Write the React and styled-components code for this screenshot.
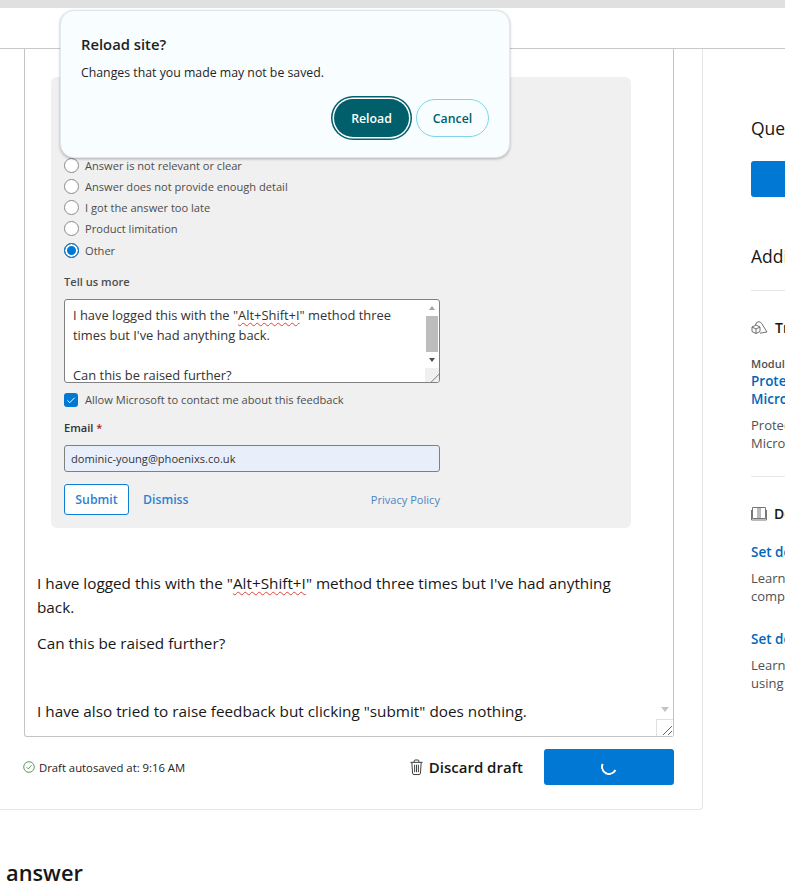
import styled, { createGlobalStyle } from 'styled-components'

const GlobalStyle = createGlobalStyle`
  html, body {
    margin: 0;
    padding: 0;
    background: #fff;
  }
  body {
    width: 785px;
    height: 885px;
    overflow: hidden;
    position: relative;
    font-family: "Open Sans", "Liberation Sans", sans-serif;
    color: #171717;
  }
  * { box-sizing: border-box; }
`

const reasons = [
  { text: 'Answer is not relevant or clear' },
  { text: 'Answer does not provide enough detail' },
  { text: 'I got the answer too late' },
  { text: 'Product limitation' },
  { text: 'Other', selected: true },
]

function TrashIcon() {
  return (
    <svg width="15" height="17" viewBox="0 0 16 18" fill="none" stroke="#333" strokeWidth="1">
      <path d="M1.5 3.5h13M5.5 3.5V2a1 1 0 0 1 1-1h3a1 1 0 0 1 1 1v1.5" />
      <path d="M3 3.5l.8 11.6a1.5 1.5 0 0 0 1.5 1.4h5.4a1.5 1.5 0 0 0 1.5-1.4L13 3.5" />
      <path d="M6 6v8M8 6v8M10 6v8" />
    </svg>
  )
}

function SavedIcon() {
  return (
    <svg width="12" height="12" viewBox="0 0 12 12" fill="none" stroke="#4c8a57" strokeWidth="0.9">
      <circle cx="6" cy="6" r="5.3" />
      <path d="M3.6 6.2l1.7 1.7 3.2-3.6" />
    </svg>
  )
}

function CubesIcon() {
  return (
    <svg width="17" height="14" viewBox="0 0 17 14" fill="none" stroke="#555" strokeWidth="0.85">
      <path d="M1 6l4-2 4 2v4.5l-4 2-4-2z" />
      <path d="M1 6l4 2 4-2M5 8v4.5" />
      <path d="M4.6 4a3.2 3.2 0 0 1 6-1.6" />
      <path d="M10.6 2.4l5.4 8.6-7 1.2" />
    </svg>
  )
}

function BookIcon() {
  return (
    <svg width="16" height="14" viewBox="0 0 16 14" fill="none" stroke="#666" strokeWidth="0.9">
      <path d="M1.5.5h13v11h-13zM.5 3v10h15V3" />
      <path d="M7 .5v11M9 .5v11" />
    </svg>
  )
}

function App() {
  return (
    <>
      <GlobalStyle />
      <TopStrip />
      <Header />
      <Main>
        <Column>
          <Card>
            <Editor>
              <FeedbackShot>
                <RadioList>
                  {reasons.map((reason) => (
                    <RadioRow key={reason.text}>
                      <Radio selected={reason.selected} />
                      {reason.text}
                    </RadioRow>
                  ))}
                </RadioList>
                <FieldLabel>Tell us more</FieldLabel>
                <FakeTextarea>
                  <FakeTextareaText>
                    I have logged this with the "<Misspelled>Alt+Shift+I</Misspelled>" method three times but I've had anything back.
                    <br />
                    <br />
                    Can this be raised further?
                  </FakeTextareaText>
                  <FakeScrollbar>
                    <ScrollArrow />
                    <ScrollThumb />
                    <ScrollArrow down />
                    <ScrollCorner />
                  </FakeScrollbar>
                </FakeTextarea>
                <CheckRow>
                  <CheckBox>
                    <svg width="10" height="10" viewBox="0 0 10 10" fill="none" stroke="#fff" strokeWidth="1">
                      <path d="M1.5 5.5l2.3 2.2 4.8-5" />
                    </svg>
                  </CheckBox>
                  Allow Microsoft to contact me about this feedback
                </CheckRow>
                <EmailLabel>Email <Required>*</Required></EmailLabel>
                <EmailInput>dominic-young@phoenixs.co.uk</EmailInput>
                <ShotActions>
                  <SubmitButton>Submit</SubmitButton>
                  <DismissLink>Dismiss</DismissLink>
                  <PrivacyLink>Privacy Policy</PrivacyLink>
                </ShotActions>
              </FeedbackShot>
              <BodyParagraph>
                I have logged this with the "<Misspelled>Alt+Shift+I</Misspelled>" method three times but I've had anything back.
              </BodyParagraph>
              <BodyParagraph>Can this be raised further?</BodyParagraph>
              <LastParagraph>I have also tried to raise feedback but clicking "submit" does nothing.</LastParagraph>
              <EditorArrow />
              <EditorResizer>
                <svg width="11" height="11" viewBox="0 0 11 11" stroke="#666" strokeWidth="1">
                  <path d="M1 10L10 1M6 10l4-4" />
                </svg>
              </EditorResizer>
            </Editor>
            <Footer>
              <DraftStatus><SavedIcon />Draft autosaved at: 9:16 AM</DraftStatus>
              <FooterActions>
                <DiscardButton><TrashIcon />Discard draft</DiscardButton>
                <PostButton><Spinner /></PostButton>
              </FooterActions>
            </Footer>
          </Card>
          <AnswerHeading>answer</AnswerHeading>
        </Column>
        <Sidebar>
          <SideHeading>Question tools</SideHeading>
          <SideButton />
          <SideHeading>Additional resources</SideHeading>
          <SideRule />
          <SectionTitle><CubesIcon />Training</SectionTitle>
          <ModuleLabel>Module</ModuleLabel>
          <SideLink>Protect and govern data in<br />Microsoft Purview</SideLink>
          <SideText>Protect sensitive data with<br />Microsoft Purview tools</SideText>
          <SideRule spaced />
          <SectionTitle><BookIcon />Documentation</SectionTitle>
          <DocLink>Set default sensitivity labels</DocLink>
          <SideText>Learn how to set defaults for<br />compliance in your tenant</SideText>
          <DocLink later>Set default label policies</DocLink>
          <SideText>Learn how to apply labels<br />using policy settings</SideText>
        </Sidebar>
      </Main>
      <Dialog>
        <DialogTitle>Reload site?</DialogTitle>
        <DialogText>Changes that you made may not be saved.</DialogText>
        <DialogActions>
          <ReloadButton>Reload</ReloadButton>
          <CancelButton>Cancel</CancelButton>
        </DialogActions>
      </Dialog>
    </>
  )
}

export default App

const TopStrip = styled.div`
  height: 8px;
  background: #e0e0e0;
`

const Header = styled.div`
  height: 41px;
  background: #fff;
  border-bottom: 1px solid #c9c9c9;
`

const Main = styled.div`
  display: flex;
  height: 836px;
  overflow: hidden;
`

const Column = styled.div`
  width: 703px;
  flex: none;
`

const Card = styled.div`
  height: 761px;
  padding: 0 28px 0 24px;
  border-right: 1px solid #e6e6e6;
  border-bottom: 1px solid #e6e6e6;
  border-bottom-right-radius: 4px;
`

const Editor = styled.div`
  position: relative;
  height: 688px;
  padding: 28px 12px 0 26px;
  border: 1px solid #c4c4c4;
  border-top: none;
  border-radius: 0 0 3px 3px;
`

const FeedbackShot = styled.div`
  width: 580px;
  height: 451px;
  padding: 80px 0 0 13px;
  background: #f0f0f0;
  border-radius: 6px;
  font-size: 11.1px;
  color: #4d4d4d;
`

const RadioList = styled.div`
  display: flex;
  flex-direction: column;
  gap: 5.3px;
`

const RadioRow = styled.div`
  display: flex;
  align-items: center;
  gap: 6px;
  height: 16px;
`

const Radio = styled.span`
  width: 15px;
  height: 15px;
  flex: none;
  border-radius: 50%;
  border: 1px solid #8a8a8a;
  background: ${({ selected }) => (selected ? '#0078d4' : '#fff')};
  box-shadow: ${({ selected }) => (selected ? 'inset 0 0 0 2px #fff' : 'none')};
  outline: ${({ selected }) => (selected ? '1px solid #0078d4' : 'none')};
  outline-offset: -1px;
`

const FieldLabel = styled.div`
  margin-top: 15.5px;
  height: 16px;
  font-size: 11.1px;
  font-weight: 600;
`

const FakeTextarea = styled.div`
  display: flex;
  width: 376px;
  height: 84px;
  margin-top: 9px;
  background: #fff;
  border: 1px solid #808080;
  border-radius: 3px;
  overflow: hidden;
`

const FakeTextareaText = styled.div`
  flex: 1;
  padding: 5px 8px;
  font-size: 12.9px;
  line-height: 20px;
  color: #333;
`

const FakeScrollbar = styled.div`
  width: 14px;
  flex: none;
  display: flex;
  flex-direction: column;
  align-items: center;
`

const ScrollArrow = styled.span`
  width: 0;
  height: 0;
  margin: 6px 0;
  border-left: 3px solid transparent;
  border-right: 3px solid transparent;
  ${({ down }) => (down ? 'border-top: 4px solid #505050;' : 'border-bottom: 4px solid #a3a3a3;')}
`

const ScrollThumb = styled.span`
  width: 12px;
  height: 36px;
  background: #bdbdbd;
`

const ScrollCorner = styled.span`
  width: 14px;
  flex: 1;
  background: linear-gradient(135deg, #f0f0f0 70%, #777 72%, #f0f0f0 76%);
`

const CheckRow = styled.div`
  display: flex;
  align-items: center;
  gap: 7px;
  height: 14px;
  margin-top: 10px;
`

const CheckBox = styled.span`
  display: flex;
  align-items: center;
  justify-content: center;
  width: 14px;
  height: 14px;
  border-radius: 3px;
  background: #0078d4;
`

const EmailLabel = styled.div`
  margin-top: 13px;
  height: 15px;
  font-weight: 600;
  color: #333;
`

const Required = styled.span`
  color: #a4262c;
`

const EmailInput = styled.div`
  display: flex;
  align-items: center;
  width: 376px;
  height: 27px;
  margin-top: 10px;
  padding: 0 6px;
  background: #e8effb;
  border: 1px solid #808080;
  border-radius: 3px;
  color: #333;
`

const ShotActions = styled.div`
  display: flex;
  align-items: center;
  width: 376px;
  margin-top: 12px;
`

const SubmitButton = styled.div`
  display: flex;
  align-items: center;
  justify-content: center;
  width: 65px;
  height: 31px;
  background: #fff;
  border: 1px solid #0f7fd6;
  border-radius: 3px;
  font-size: 12.3px;
  font-weight: 600;
  color: #2b83cf;
`

const DismissLink = styled.div`
  margin-left: 14px;
  font-size: 12.3px;
  font-weight: 600;
  color: #2b83cf;
`

const PrivacyLink = styled.div`
  margin-left: auto;
  font-size: 11.1px;
  color: #4a86c0;
`

const Misspelled = styled.span`
  text-decoration: underline wavy #e0433c 1px;
  text-underline-offset: 2px;
`

const BodyParagraph = styled.p`
  margin: 0 0 0 -14px;
  padding-top: 12px;
  width: 600px;
  font-size: 15.3px;
  line-height: 24px;
  color: #171717;

  &:first-of-type {
    padding-top: 43px;
  }
`

const LastParagraph = styled(BodyParagraph)`
  padding-top: 44px;
`

const EditorArrow = styled.span`
  position: absolute;
  right: 4px;
  bottom: 24px;
  border-left: 4px solid transparent;
  border-right: 4px solid transparent;
  border-top: 5px solid #c4c4c4;
`

const EditorResizer = styled.span`
  position: absolute;
  right: 0;
  bottom: 0;
  display: flex;
  align-items: flex-end;
  justify-content: flex-end;
  width: 17px;
  height: 17px;
  background: #fff;
  border-left: 1px solid #e0e0e0;
  border-top: 1px solid #e0e0e0;
`

const Footer = styled.div`
  display: flex;
  align-items: center;
  justify-content: space-between;
  margin-top: 12px;
`

const DraftStatus = styled.div`
  display: flex;
  align-items: center;
  gap: 4px;
  margin-left: -1px;
  font-size: 11.3px;
  color: #222;
`

const FooterActions = styled.div`
  display: flex;
  align-items: center;
  gap: 21px;
`

const DiscardButton = styled.div`
  display: flex;
  align-items: center;
  gap: 5px;
  font-size: 15px;
  font-weight: 600;
  color: #171717;
`

const PostButton = styled.div`
  display: flex;
  align-items: center;
  justify-content: center;
  width: 130px;
  height: 36px;
  background: #0078d4;
  border-radius: 3px;
`

const Spinner = styled.span`
  width: 16px;
  height: 16px;
  border-radius: 50%;
  border: 2px solid transparent;
  border-left-color: #fff;
  border-bottom-color: #fff;
  transform: rotate(-20deg);
`

const AnswerHeading = styled.h2`
  margin: 51px 0 0 6px;
  font-size: 21.8px;
  line-height: 24px;
  font-weight: 600;
  color: #171717;
`

const Sidebar = styled.div`
  flex: none;
  width: 300px;
  padding: 67px 0 0 48px;
  white-space: nowrap;
`

const SideHeading = styled.div`
  font-size: 17.5px;
  line-height: 24px;
  color: #171717;
`

const SideButton = styled.div`
  width: 200px;
  height: 36px;
  margin: 21px 0 47px;
  background: #0078d4;
  border-radius: 3px;
`

const SideRule = styled.div`
  width: 240px;
  height: 1px;
  margin-top: ${({ spaced }) => (spaced ? '24px' : '22px')};
  background: #e6e6e6;
`

const SectionTitle = styled.div`
  display: flex;
  align-items: center;
  gap: 7px;
  margin-top: 27px;
  font-size: 14px;
  line-height: 20px;
  font-weight: 600;
`

const ModuleLabel = styled.div`
  margin-top: 19px;
  font-size: 11px;
  line-height: 14px;
  font-weight: 600;
  color: #505050;
`

const SideLink = styled.div`
  margin-top: 1px;
  font-size: 13.5px;
  line-height: 18px;
  font-weight: 600;
  color: #0067b8;
`

const DocLink = styled(SideLink)`
  margin-top: ${({ later }) => (later ? '25px' : '19px')};
`

const SideText = styled.div`
  margin-top: 8px;
  font-size: 13px;
  line-height: 18px;
  color: #505050;
`

const Dialog = styled.div`
  position: absolute;
  left: 60px;
  top: 10px;
  width: 450px;
  height: 148px;
  padding: 23px 20px 0;
  background: #f8fdff;
  border: 1px solid #dfe8ea;
  border-radius: 14px;
  box-shadow: 0 1px 3px rgba(0, 0, 0, 0.28);
`

const DialogTitle = styled.div`
  font-size: 14.8px;
  line-height: 20px;
  font-weight: 600;
  color: #1f1f1f;
`

const DialogText = styled.div`
  margin-top: 11px;
  font-size: 12.3px;
  line-height: 16px;
  color: #1f1f1f;
`

const DialogActions = styled.div`
  display: flex;
  justify-content: flex-end;
  align-items: center;
  gap: 7px;
  margin-top: 18px;
`

const ReloadButton = styled.div`
  display: flex;
  align-items: center;
  justify-content: center;
  width: 75px;
  height: 38px;
  background: #005f6a;
  box-shadow: 0 0 0 1.5px #fff, 0 0 0 3px #005f6a;
  border-radius: 19px;
  font-size: 12.3px;
  font-weight: 600;
  color: #fff;
`

const CancelButton = styled.div`
  display: flex;
  align-items: center;
  justify-content: center;
  width: 73px;
  height: 38px;
  border: 1px solid #7fd6e8;
  border-radius: 19px;
  font-size: 12.3px;
  font-weight: 600;
  color: #005f6a;
`
